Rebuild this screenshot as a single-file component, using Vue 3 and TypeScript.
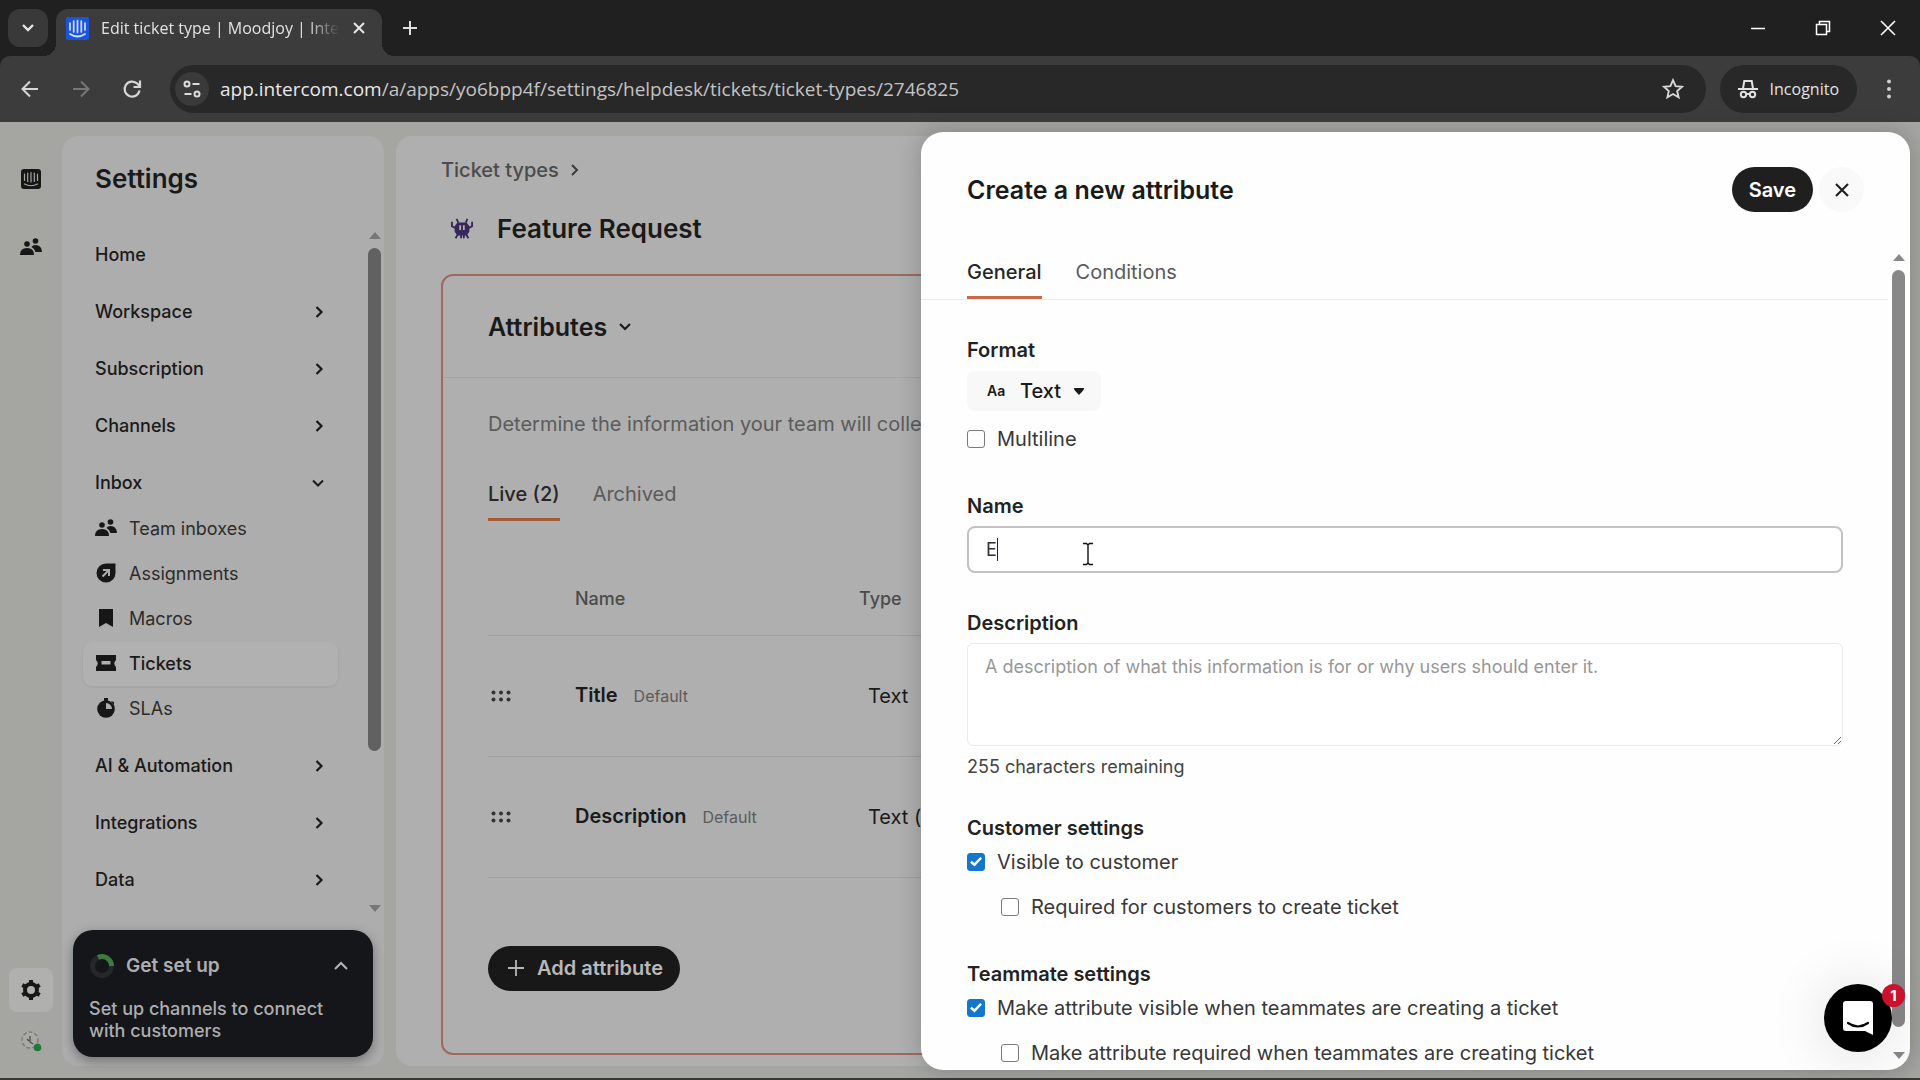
<script setup lang="ts">
import { ref } from 'vue'

interface NavItem {
  label: string
  open?: boolean
  leaf?: boolean
  children?: { label: string; icon: string; active?: boolean }[]
}

const nav: NavItem[] = [
  { label: 'Home', leaf: true },
  { label: 'Workspace' },
  { label: 'Subscription' },
  { label: 'Channels' },
  {
    label: 'Inbox',
    open: true,
    children: [
      { label: 'Team inboxes', icon: 'people' },
      { label: 'Assignments', icon: 'assign' },
      { label: 'Macros', icon: 'bookmark' },
      { label: 'Tickets', icon: 'ticket', active: true },
      { label: 'SLAs', icon: 'timer' },
    ],
  },
  { label: 'AI & Automation' },
  { label: 'Integrations' },
  { label: 'Data' },
]

const attributes = [
  { name: 'Title', type: 'Text' },
  { name: 'Description', type: 'Text (' },
]

const name = ref('E')
const description = ref('')
const format = ref('Text')
const multiline = ref(false)
const visibleToCustomer = ref(true)
const requiredForCustomer = ref(false)
const visibleToTeammate = ref(true)
const requiredForTeammate = ref(false)
</script>

<template>
  <div class="window">
    <header class="chrome">
      <div class="tabstrip">
        <button class="tab-search" aria-label="Search tabs">
          <svg width="14" height="10" viewBox="0 0 14 10"><path d="M2 2l5 5 5-5" fill="none" stroke="#e6e6e6" stroke-width="2.4" /></svg>
        </button>
        <div class="tab">
          <svg width="23" height="23" viewBox="0 0 23 23">
            <rect width="23" height="23" rx="2" fill="#1c55dc" />
            <path d="M4 6v7M7.7 4v11M11.5 3.500v12M15.300 4v11M19 6v7" stroke="#cfe0ff" stroke-width="1.700" stroke-linecap="round" />
            <path d="M4 17q7.500 5 15 0" fill="none" stroke="#cfe0ff" stroke-width="1.800" stroke-linecap="round" />
          </svg>
          <span class="tab-title">Edit ticket type | Moodjoy | Inte</span>
          <button class="bare" aria-label="Close tab">
            <svg width="14" height="14" viewBox="0 0 14 14"><path d="M2 2l10 10M12 2L2 12" stroke="#e6e6e6" stroke-width="2" /></svg>
          </button>
        </div>
        <button class="bare new-tab" aria-label="New tab">
          <svg width="16" height="16" viewBox="0 0 16 16"><path d="M8 1v14M1 8h14" stroke="#dedede" stroke-width="2" /></svg>
        </button>
        <div class="win-buttons">
          <button class="bare" aria-label="Minimize"><svg width="16" height="16" viewBox="0 0 16 16"><path d="M1 8.500h14" stroke="#fff" stroke-width="1.500" /></svg></button>
          <button class="bare" aria-label="Restore"><svg width="16" height="16" viewBox="0 0 16 16"><path d="M1.500 4.500h10v10h-10zM4.500 4V1.500h10v10H12" fill="none" stroke="#fff" stroke-width="1.500" /></svg></button>
          <button class="bare" aria-label="Close"><svg width="16" height="16" viewBox="0 0 16 16"><path d="M1 1l14 14M15 1L1 15" stroke="#fff" stroke-width="1.600" /></svg></button>
        </div>
      </div>
      <div class="toolbar">
        <div class="nav-buttons">
          <button class="bare" aria-label="Back"><svg width="20" height="20" viewBox="0 0 20 20"><path d="M18 10H3M10 2.500L2.500 10l7.500 7.500" fill="none" stroke="#d6d6d6" stroke-width="2" /></svg></button>
          <button class="bare" aria-label="Forward"><svg width="20" height="20" viewBox="0 0 20 20"><path d="M2 10h15M10 2.500l7.500 7.500-7.500 7.500" fill="none" stroke="#777" stroke-width="2" /></svg></button>
          <button class="bare" aria-label="Reload"><svg width="20" height="20" viewBox="0 0 20 20"><path d="M17.500 11.500A7.500 7.500 0 1 1 15.500 4.800L17.500 7" fill="none" stroke="#d6d6d6" stroke-width="2.200" /><path d="M18 1.500V8h-6.500" fill="none" stroke="#d6d6d6" stroke-width="2.200" /></svg></button>
        </div>
        <div class="address">
          <span class="site-info">
            <svg width="20" height="20" viewBox="0 0 20 20" fill="none" stroke="#dcdcdc" stroke-width="2"><circle cx="5" cy="5" r="2.500" /><path d="M10.500 5h7M2.500 15h7" /><circle cx="15" cy="15" r="2.500" /></svg>
          </span>
          <span class="url"><b>app.intercom.com</b>/a/apps/yo6bpp4f/settings/helpdesk/tickets/ticket-types/2746825</span>
          <button class="bare" aria-label="Bookmark">
            <svg width="22" height="22" viewBox="0 0 22 22"><path d="M11 2.200l2.600 5.900 6.400.6-4.800 4.300 1.400 6.300-5.600-3.300-5.600 3.300 1.400-6.300L2 8.700l6.400-.6z" fill="none" stroke="#d6d6d6" stroke-width="1.900" /></svg>
          </button>
        </div>
        <div class="incognito">
          <svg width="20" height="20" viewBox="0 0 20 20" fill="none" stroke="#e2e2e2" stroke-width="2"><path d="M5 9.500L6.300 2h7.400L15 9.500M0 10h20" /><circle cx="5.500" cy="15.500" r="2.700" /><circle cx="14.500" cy="15.500" r="2.700" /><path d="M8 15h4" /></svg>
          <span>Incognito</span>
        </div>
        <button class="bare kebab" aria-label="Menu"><svg width="6" height="20" viewBox="0 0 6 20" fill="#cfcfcf"><circle cx="3" cy="2.500" r="2" /><circle cx="3" cy="10" r="2" /><circle cx="3" cy="17.500" r="2" /></svg></button>
      </div>
    </header>

    <div class="app">
      <nav class="rail" aria-label="Apps">
        <svg width="20" height="20" viewBox="0 0 20 20"><rect width="20" height="20" rx="3" fill="#171717" /><path d="M3.500 5v6.500M6.700 4v8.500M10 3.500v9.500M13.300 4v8.500M16.500 5v6.500M3.500 15q6.500 3.500 13 0" fill="none" stroke="#a4a5a0" stroke-width="1.200" stroke-linecap="round" /></svg>
        <svg class="rail-people" width="22" height="18" viewBox="0 0 22 18" fill="#171717"><circle cx="7" cy="6" r="2.800" /><circle cx="15.500" cy="3" r="2.800" /><path d="M0 17q0-7 7-7t7 7z" /><path d="M11.500 9q1-2 4-2 6 0 6.500 7h-6.500q-1-3.500-4-5z" /></svg>
        <span class="rail-gear">
          <svg width="22" height="22" viewBox="0 0 22 22"><circle cx="11" cy="11" r="6" fill="none" stroke="#171717" stroke-width="4" /><path d="M11 1v4M11 17v4M2.300 6l3.500 2M16.200 14l3.500 2M2.300 16l3.500-2M16.200 8l3.500-2" stroke="#171717" stroke-width="4" /></svg>
        </span>
        <svg class="rail-avatar" width="22" height="22" viewBox="0 0 22 22"><circle cx="10" cy="10" r="8" fill="#aaa9a6" stroke="#7c7c79" stroke-width="1.500" stroke-dasharray="4 2" /><path d="M10 6v6l3 2M7 9l2 2" fill="none" stroke="#4c4c4a" stroke-width="1.300" /><circle cx="17.500" cy="17.500" r="3.800" fill="#1f7a3c" /></svg>
      </nav>

      <aside class="sidebar">
        <h1>Settings</h1>
        <div class="nav-area">
          <ul class="nav">
            <li v-for="item in nav" :key="item.label">
              <a class="nav-row" href="#">
                <span>{{ item.label }}</span>
                <svg v-if="item.open" width="14" height="14" viewBox="0 0 14 14"><path d="M2 4.500l5 5 5-5" fill="none" stroke="#1a1a1a" stroke-width="2" /></svg>
                <svg v-else-if="!item.leaf" width="14" height="14" viewBox="0 0 14 14"><path d="M5.500 2l5 5-5 5" fill="none" stroke="#1a1a1a" stroke-width="2.200" /></svg>
              </a>
              <ul v-if="item.children" class="sub">
                <li v-for="child in item.children" :key="child.label">
                  <a class="sub-row" :class="{ active: child.active }" href="#">
                    <svg v-if="child.icon === 'people'" width="22" height="22" viewBox="0 0 22 22" fill="#171717"><circle cx="7" cy="7" r="2.800" /><circle cx="15.500" cy="4" r="2.800" /><path d="M0 18q0-7 7-7t7 7z" /><path d="M11.500 10q1-2 4-2 6 0 6.500 7h-6.500q-1-3.500-4-5z" /></svg>
                    <svg v-else-if="child.icon === 'assign'" width="22" height="22" viewBox="0 0 22 22"><path d="M11 0.500h9.500V10A9.500 9.500 0 1 1 11 .500z" fill="#171717" /><path d="M7.500 13.500l6-6M8 7h6v6" fill="none" stroke="#aeadad" stroke-width="2" /></svg>
                    <svg v-else-if="child.icon === 'bookmark'" width="22" height="22" viewBox="0 0 22 22"><path d="M4 1h14v18l-7-4-7 4z" fill="#171717" /></svg>
                    <svg v-else-if="child.icon === 'ticket'" width="22" height="22" viewBox="0 0 22 22"><path d="M1 2h20v5q-3.500 3.500 0 7v4H1v-4q3.500-3.500 0-7z" fill="#171717" /><path d="M6.500 8h9v3.500h-9z" fill="#b1b0b1" /></svg>
                    <svg v-else width="22" height="22" viewBox="0 0 22 22"><circle cx="11" cy="11" r="8.800" fill="#171717" /><path d="M9 0h4v4H9zM16 3l3 1v3z" fill="#171717" /><path d="M11 5a6 6 0 0 1 6 6h-6z" fill="#aeadad" /></svg>
                    <span>{{ child.label }}</span>
                  </a>
                </li>
              </ul>
            </li>
          </ul>
          <div class="scroll scroll-side" aria-hidden="true"><i class="up"></i><i class="thumb"></i><i class="down"></i></div>
        </div>
        <section class="setup">
          <div class="setup-head">
            <svg width="26" height="26" viewBox="0 0 26 26" fill="none" stroke-width="5"><circle cx="13" cy="13" r="9.500" stroke="#26262b" /><path d="M9 4.400A9.500 9.500 0 0 1 22.500 13" stroke="#3c7a41" /></svg>
            <h2>Get set up</h2>
            <svg width="16" height="12" viewBox="0 0 16 12"><path d="M2 9l6-6 6 6" fill="none" stroke="#b5b5b8" stroke-width="2" /></svg>
          </div>
          <p>Set up channels to connect with customers</p>
        </section>
      </aside>

      <main class="main">
        <a class="crumb" href="#">Ticket types
          <svg width="10" height="14" viewBox="0 0 10 14"><path d="M2 2l5 5-5 5" fill="none" stroke="#3b3b3b" stroke-width="2" /></svg>
        </a>
        <div class="page-title">
          <span class="type-icon">
            <svg width="24" height="22" viewBox="0 0 26 24"><path d="M2 4v5l4 2M24 4v5l-4 2M9 5L7 1M17 5l2-4M9 17l-3 5M17 17l3 5M12 18v4M15 18v4" fill="none" stroke="#37265a" stroke-width="2" /><path d="M8 5h10l3 4v6l-3 4H8l-3-4V9z" fill="#37265a" /><path d="M10 8h2v5h-2zM14 8h2v5h-2z" fill="#b1adb6" /></svg>
          </span>
          <h2>Feature Request</h2>
        </div>
        <section class="card">
          <div class="card-head">
            <h3>Attributes</h3>
            <svg width="14" height="12" viewBox="0 0 14 12"><path d="M2 3l5 5 5-5" fill="none" stroke="#1a1a1a" stroke-width="2" /></svg>
          </div>
          <div class="card-body">
            <p class="hint">Determine the information your team will collect</p>
            <div class="tabs card-tabs">
              <button class="on">Live (2)</button>
              <button>Archived</button>
            </div>
            <table>
              <thead>
                <tr><th class="grip"></th><th class="col-name">Name</th><th>Type</th></tr>
              </thead>
              <tbody>
                <tr v-for="a in attributes" :key="a.name">
                  <td class="grip"><svg width="20" height="12" viewBox="0 0 20 12" fill="#333"><circle cx="2.500" cy="2.500" r="2" /><circle cx="10" cy="2.500" r="2" /><circle cx="17.500" cy="2.500" r="2" /><circle cx="2.500" cy="9.500" r="2" /><circle cx="10" cy="9.500" r="2" /><circle cx="17.500" cy="9.500" r="2" /></svg></td>
                  <td class="col-name"><strong>{{ a.name }}</strong><small>Default</small></td>
                  <td class="col-type">{{ a.type }}</td>
                </tr>
              </tbody>
            </table>
            <button class="pill add">
              <svg width="18" height="18" viewBox="0 0 18 18"><path d="M9 1v16M1 9h16" stroke="#b5b5b5" stroke-width="1.800" /></svg>
              Add attribute
            </button>
          </div>
        </section>
      </main>

      <section class="drawer" aria-label="Create a new attribute">
        <header class="drawer-head">
          <h2>Create a new attribute</h2>
          <button class="pill save">Save</button>
          <button class="close" aria-label="Close"><svg width="16" height="16" viewBox="0 0 16 16"><path d="M2 2l12 12M14 2L2 14" stroke="#222" stroke-width="2.200" /></svg></button>
        </header>
        <div class="drawer-main">
          <div class="drawer-scroll">
            <div class="tabs drawer-tabs">
              <button class="on">General</button>
              <button>Conditions</button>
            </div>
            <form class="form" @submit.prevent>
              <div class="field format-field">
                <label class="title" for="format">Format</label>
                <div class="format">
                  <span class="aa">Aa</span>
                  <select id="format" v-model="format"><option>Text</option></select>
                  <svg width="12" height="8" viewBox="0 0 12 8"><path d="M1 1h10q0 2-1.500 3.300L6 8 2.500 4.300Q1 3 1 1z" fill="#1a1a1a" /></svg>
                </div>
                <label class="check"><input v-model="multiline" type="checkbox" /><span>Multiline</span></label>
              </div>
              <div class="field">
                <label class="title" for="name">Name</label>
                <div class="name-box">
                  <input id="name" v-model="name" type="text" />
                  <i class="caret"></i>
                  <svg class="ibeam" width="12" height="24" viewBox="0 0 12 24"><path d="M1 1.500h3.500L6 3l1.500-1.500H11M1 22.500h3.500L6 21l1.500 1.500H11M6 3v18" fill="none" stroke="#111" stroke-width="1.400" /></svg>
                </div>
              </div>
              <div class="field">
                <label class="title" for="description">Description</label>
                <textarea id="description" v-model="description" placeholder="A description of what this information is for or why users should enter it."></textarea>
                <p class="remaining">{{ 255 - description.length }} characters remaining</p>
              </div>
              <fieldset>
                <legend class="title">Customer settings</legend>
                <label class="check"><input v-model="visibleToCustomer" type="checkbox" /><span>Visible to customer</span></label>
                <label class="check nested"><input v-model="requiredForCustomer" type="checkbox" /><span>Required for customers to create ticket</span></label>
              </fieldset>
              <fieldset>
                <legend class="title">Teammate settings</legend>
                <label class="check"><input v-model="visibleToTeammate" type="checkbox" /><span>Make attribute visible when teammates are creating a ticket</span></label>
                <label class="check nested"><input v-model="requiredForTeammate" type="checkbox" /><span>Make attribute required when teammates are creating ticket</span></label>
              </fieldset>
            </form>
          </div>
          <div class="scroll scroll-drawer" aria-hidden="true"><i class="up"></i><i class="thumb"></i><i class="down"></i></div>
        </div>
      </section>

      <button class="messenger" aria-label="Open messenger">
        <svg width="32" height="36" viewBox="0 0 32 36"><path d="M4 1h24q3 0 3 3v31l-8-4H4q-3 0-3-3V4q0-3 3-3z" fill="#fff" /><path d="M6 23q10 7 20 0" fill="none" stroke="#000" stroke-width="2.200" stroke-linecap="round" /></svg>
        <span class="badge">1</span>
      </button>
    </div>
  </div>
</template>

<style>
body {
  margin: 0;
  background: #383836;
}
</style>

<style scoped>
* {
  box-sizing: border-box;
}
.window {
  display: flex;
  flex-direction: column;
  height: 100vh;
  overflow: hidden;
  font-family: Inter, "Liberation Sans", sans-serif;
  font-size: 18px;
  line-height: 24px;
  color: #1a1a1a;
}
h1, h2, h3, p, ul, fieldset {
  margin: 0;
  padding: 0;
  border: 0;
}
ul {
  list-style: none;
}
a {
  color: inherit;
  text-decoration: none;
}
button, input, select, textarea {
  font: inherit;
  color: inherit;
}
svg {
  display: block;
  flex: none;
}
.bare {
  display: flex;
  align-items: center;
  padding: 0;
  border: 0;
  background: none;
}

/* Browser frame */
.chrome {
  flex: none;
  background: #202020;
  font-family: "Open Sans", "Noto Sans", sans-serif;
}
.tabstrip {
  display: flex;
  height: 56px;
  padding: 9px 24px 0 8px;
}
.tab-search {
  display: flex;
  align-items: center;
  justify-content: center;
  width: 40px;
  height: 38px;
  padding: 0;
  border: 0;
  border-radius: 12px;
  background: #393939;
}
.tab {
  position: relative;
  display: flex;
  align-items: center;
  width: 326px;
  margin-left: 8px;
  padding: 0 16px 9px 10px;
  border-radius: 12px 12px 0 0;
  background: #3c3c3c;
}
.tab::before, .tab::after {
  content: "";
  position: absolute;
  bottom: 0;
  width: 12px;
  height: 12px;
}
.tab::before {
  right: 100%;
  background: radial-gradient(circle at 0 0, transparent 12px, #3c3c3c 12px);
}
.tab::after {
  left: 100%;
  background: radial-gradient(circle at 100% 0, transparent 12px, #3c3c3c 12px);
}
.tab-title {
  flex: 1;
  min-width: 0;
  margin: 0 12px 0 12px;
  overflow: hidden;
  white-space: nowrap;
  font-size: 16px;
  color: #e3e3e3;
  mask-image: linear-gradient(to right, #000 86%, transparent);
}
.new-tab {
  height: 38px;
  margin-left: 20px;
}
.win-buttons {
  display: flex;
  gap: 49px;
  height: 38px;
  margin-left: auto;
}
.toolbar {
  display: flex;
  align-items: center;
  height: 66px;
  padding: 0 28px 0 20px;
  border-radius: 10px 10px 0 0;
  background: #3c3c3c;
}
.nav-buttons {
  display: flex;
  gap: 31px;
  margin-right: 28px;
}
.address {
  display: flex;
  flex: 1;
  align-items: center;
  height: 48px;
  padding: 0 22px 0 5px;
  border-radius: 24px;
  background: #282828;
}
.site-info {
  display: flex;
  align-items: center;
  justify-content: center;
  width: 34px;
  height: 34px;
  margin-right: 11px;
  border-radius: 50%;
  background: #3a3a3a;
}
.url {
  flex: 1;
  font-size: 19px;
  color: #c3c3c3;
}
.url b {
  font-weight: 400;
  color: #e8e8e8;
}
.incognito {
  display: flex;
  align-items: center;
  gap: 12px;
  height: 48px;
  margin: 0 29px 0 14px;
  padding: 0 18px;
  border-radius: 24px;
  background: #282828;
  font-size: 16px;
  color: #e3e3e3;
}

/* Application */
.app {
  position: relative;
  display: flex;
  flex: 1;
  min-height: 0;
  margin-bottom: 2px;
  padding-top: 14px;
  background: #a5a5a2;
}
.rail {
  display: flex;
  flex: none;
  flex-direction: column;
  align-items: center;
  width: 62px;
  padding: 33px 0 26px;
}
.rail-people {
  margin-top: 49px;
}
.rail-gear {
  display: flex;
  align-items: center;
  justify-content: center;
  width: 44px;
  height: 44px;
  margin-top: auto;
  border-radius: 8px;
  background: #b0b0ae;
}
.rail-avatar {
  margin-top: 18px;
}
.sidebar {
  display: flex;
  flex: none;
  flex-direction: column;
  width: 322px;
  margin-bottom: 12px;
  border-radius: 16px;
  background: #aeadad;
}
.sidebar h1 {
  padding: 27px 33px 0;
  font-size: 26px;
  font-weight: 600;
  line-height: 32px;
}
.nav-area {
  display: flex;
  flex: 1;
  min-height: 0;
  margin-top: 35px;
}
.nav {
  flex: 1;
  padding-top: 6px;
}
.nav > li {
  margin-bottom: 19px;
}
.nav-row {
  display: flex;
  align-items: center;
  justify-content: space-between;
  height: 38px;
  padding: 0 43px 0 33px;
  font-weight: 500;
}
.sub {
  margin-top: 8px;
}
.sub-row {
  display: flex;
  align-items: center;
  gap: 12px;
  height: 38px;
  margin: 0 33px 7px 24px;
  padding: 0 9px;
  border-radius: 6px;
  color: #2c2c2c;
}
.sub > li:last-child .sub-row {
  margin-bottom: 0;
}
.sub-row.active {
  background: #b2b1b2;
  box-shadow: 0 0 0 3px #b2b1b2, 0 1px 1px 4px #a8a7a8;
  font-weight: 500;
  color: #1a1a1a;
}
.scroll {
  display: flex;
  flex: none;
  flex-direction: column;
  align-items: center;
  width: 13px;
}
.scroll i {
  display: block;
}
.up, .down {
  border: 6px solid transparent;
}
.up {
  border-top: 0;
  border-bottom: 7px solid #777;
}
.down {
  margin-top: auto;
  border-bottom: 0;
  border-top: 7px solid #777;
}
.thumb {
  width: 13px;
  margin-top: 9px;
  border-radius: 7px;
  background: #616161;
}
.scroll-side {
  margin: 2px 3px 18px 0;
}
.scroll-side .thumb {
  height: 74%;
}
.setup {
  height: 127px;
  margin: 0 11px 9px;
  padding: 20px 16px 18px;
  border-radius: 20px;
  background: #15161a;
  box-shadow: 0 4px 12px rgba(0, 0, 0, 0.35);
  color: #aeaeb0;
}
.setup-head {
  display: flex;
  align-items: center;
  gap: 11px;
  margin-bottom: 16px;
  padding-right: 8px;
}
.setup-head h2 {
  flex: 1;
  font-size: 19px;
  font-weight: 600;
  line-height: 32px;
}
.setup p {
  font-weight: 500;
  line-height: 22px;
}
.main {
  flex: 1;
  min-width: 0;
  margin: 0 10px 12px 12px;
  padding: 22px 45px 0;
  border-radius: 16px;
  background: #afafaf;
}
.crumb {
  display: flex;
  align-items: center;
  gap: 11px;
  font-size: 20px;
  font-weight: 500;
  color: #4b4b4b;
}
.page-title {
  display: flex;
  align-items: center;
  gap: 14px;
  margin: 27px 0 25px;
}
.type-icon {
  display: flex;
  align-items: center;
  justify-content: center;
  width: 42px;
  height: 40px;
}
.page-title h2 {
  font-size: 26px;
  font-weight: 600;
  line-height: 40px;
}
.card {
  border: 2px solid #9e6a5e;
  border-radius: 12px;
  white-space: nowrap;
}
.card-head {
  display: flex;
  align-items: center;
  gap: 11px;
  height: 102px;
  padding: 0 45px;
  border-bottom: 1px solid #a3a3a3;
}
.card-head h3 {
  font-size: 25px;
  font-weight: 600;
}
.card-body {
  padding: 34px 45px 62px;
}
.hint {
  font-size: 20px;
  color: #5b5b5b;
}
.tabs {
  display: flex;
}
.tabs button {
  padding: 0 0 12px;
  border: 0;
  border-bottom: 3px solid transparent;
  background: none;
  font-size: 20px;
  color: #5a5a5a;
}
.tabs .on {
  font-weight: 500;
  color: #262626;
}
.card-tabs {
  gap: 33px;
  margin-top: 46px;
}
.card-tabs .on {
  border-color: #a35a35;
}
table {
  width: 100%;
  margin-top: 42px;
  border-collapse: collapse;
}
th, td {
  padding: 0;
  border-bottom: 1px solid #9f9f9f;
  text-align: left;
}
th {
  height: 72px;
  font-weight: 500;
  color: #4b4b4b;
}
td {
  height: 121px;
  font-size: 20px;
}
.grip {
  width: 87px;
}
td.grip {
  padding-left: 3px;
}
.col-name {
  width: 284px;
}
.col-name strong {
  font-weight: 600;
}
.col-name small {
  margin-left: 16px;
  font-size: 16px;
  color: #5b5b5b;
}
.col-type {
  padding-left: 9px;
}
.pill {
  display: flex;
  align-items: center;
  gap: 12px;
  height: 45px;
  border: 0;
  border-radius: 23px;
  font-size: 20px;
  font-weight: 600;
}
.add {
  margin-top: 68px;
  padding: 0 17px 0 19px;
  background: #181818;
  color: #b9b9b9;
}

/* Attribute drawer */
.drawer {
  position: absolute;
  top: 10px;
  right: 10px;
  bottom: 8px;
  display: flex;
  flex-direction: column;
  width: calc(50% + 29px);
  overflow: hidden;
  border-radius: 22px;
  background: #fefefe;
  box-shadow: 0 0 24px rgba(0, 0, 0, 0.22);
}
.drawer-head {
  display: flex;
  align-items: center;
  padding: 35px 46px 0 46px;
}
.drawer-head h2 {
  margin-right: auto;
  font-size: 25px;
  font-weight: 600;
}
.save {
  padding: 0 17px;
  background: #1f1f1f;
  color: #fff;
}
.close {
  display: flex;
  align-items: center;
  justify-content: center;
  width: 45px;
  height: 45px;
  margin-left: 6px;
  padding: 0;
  border: 0;
  border-radius: 50%;
  background: #f9f9f9;
}
.drawer-main {
  display: flex;
  flex: 1;
  min-height: 0;
  margin-top: 42px;
}
.drawer-scroll {
  flex: 1;
  overflow: hidden;
}
.drawer-tabs {
  gap: 34px;
  padding: 6px 46px 0;
  border-bottom: 1px solid #ebebeb;
}
.drawer-tabs .on {
  border-color: #c96a4b;
}
.form {
  padding: 38px 45px 0 46px;
}
.field {
  display: flex;
  flex-direction: column;
  margin-bottom: 38px;
}
.format-field {
  margin-bottom: 43px;
}
.title {
  padding: 0;
  font-size: 20px;
  font-weight: 600;
  color: #222;
}
.format {
  position: relative;
  display: flex;
  align-items: center;
  align-self: flex-start;
  margin-top: 9px;
}
.format select {
  width: 134px;
  height: 40px;
  padding: 0 0 0 53px;
  border: 0;
  border-radius: 8px;
  appearance: none;
  background: #f8f8f8;
  font-size: 20px;
  font-weight: 500;
}
.aa {
  position: absolute;
  left: 20px;
  font-size: 14px;
  font-weight: 600;
}
.format svg {
  position: absolute;
  right: 16px;
}
.check {
  display: flex;
  align-items: center;
  gap: 12px;
  font-size: 20px;
  color: #383838;
}
.format + .check {
  margin-top: 16px;
}
.check input {
  display: grid;
  place-content: center;
  flex: none;
  width: 18px;
  height: 18px;
  margin: 0;
  border: 1px solid #7b7b7b;
  border-radius: 3px;
  appearance: none;
  background: #fff;
}
.check input:checked {
  border-color: #1577cc;
  background: #1577cc;
}
.check input:checked::before {
  content: "";
  width: 12px;
  height: 10px;
  background: #fff;
  clip-path: polygon(0 56%, 14% 38%, 36% 60%, 86% 0, 100% 14%, 38% 96%);
}
.name-box {
  position: relative;
  display: flex;
  margin-top: 8px;
}
.name-box input {
  width: 100%;
  height: 47px;
  padding: 0 17px;
  border: 2px solid #c2c2c2;
  border-radius: 8px;
  outline: 0;
  background: #fff;
  color: #333;
}
.caret {
  position: absolute;
  top: 12px;
  left: 30px;
  width: 1px;
  height: 23px;
  background: #222;
}
.ibeam {
  position: absolute;
  top: 16px;
  left: 115px;
}
textarea {
  display: block;
  height: 103px;
  margin-top: 8px;
  padding: 11px 17px;
  border: 1px solid #ebebeb;
  border-radius: 6px;
  background: #fff;
}
textarea::placeholder {
  color: #979797;
}
.remaining {
  margin-top: 9px;
  color: #444;
}
fieldset {
  margin-bottom: 43px;
}
.field + fieldset {
  margin-top: -1px;
}
fieldset .check {
  margin-top: 10px;
}
fieldset .nested {
  margin-top: 21px;
  padding-left: 34px;
}
.scroll-drawer {
  margin: 0 5px 11px 4px;
}
.scroll-drawer .up {
  border-bottom-color: #888;
}
.scroll-drawer .down {
  border-top-color: #888;
}
.scroll-drawer .thumb {
  height: 94%;
  background: #888;
}
.messenger {
  position: absolute;
  right: 28px;
  bottom: 26px;
  display: flex;
  align-items: center;
  justify-content: center;
  width: 68px;
  height: 68px;
  padding: 0;
  border: 0;
  border-radius: 50%;
  background: #000;
  box-shadow: 0 2px 60px rgba(0, 0, 0, 0.14);
}
.badge {
  position: absolute;
  top: 0;
  right: -13px;
  width: 23px;
  height: 23px;
  border-radius: 50%;
  background: #cb112d;
  font-size: 15px;
  font-weight: 700;
  line-height: 23px;
  color: #fff;
}
</style>
